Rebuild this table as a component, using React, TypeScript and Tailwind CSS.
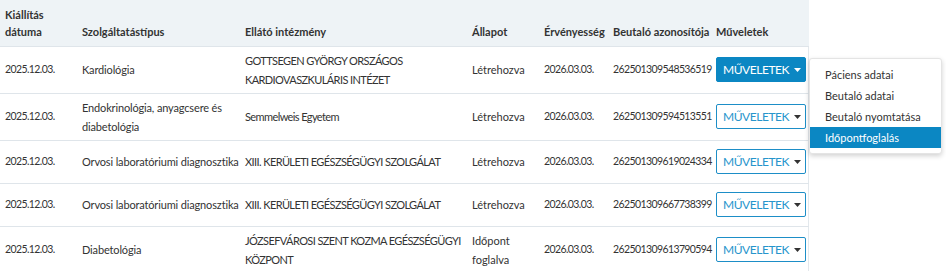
import React from "react";

type Row = {
  date: string;
  service: string;
  provider: string;
  status: string;
  validUntil: string;
  id: string;
  active?: boolean;
};

const rows: Row[] = [
  {
    date: "2025.12.03.",
    service: "Kardiológia",
    provider: "GOTTSEGEN GYÖRGY ORSZÁGOS KARDIOVASZKULÁRIS INTÉZET",
    status: "Létrehozva",
    validUntil: "2026.03.03.",
    id: "262501309548536519",
    active: true,
  },
  {
    date: "2025.12.03.",
    service: "Endokrinológia, anyagcsere és diabetológia",
    provider: "Semmelweis Egyetem",
    status: "Létrehozva",
    validUntil: "2026.03.03.",
    id: "262501309594513551",
  },
  {
    date: "2025.12.03.",
    service: "Orvosi laboratóriumi diagnosztika",
    provider: "XIII. KERÜLETI EGÉSZSÉGÜGYI SZOLGÁLAT",
    status: "Létrehozva",
    validUntil: "2026.03.03.",
    id: "262501309619024334",
  },
  {
    date: "2025.12.03.",
    service: "Orvosi laboratóriumi diagnosztika",
    provider: "XIII. KERÜLETI EGÉSZSÉGÜGYI SZOLGÁLAT",
    status: "Létrehozva",
    validUntil: "2026.03.03.",
    id: "262501309667738399",
  },
  {
    date: "2025.12.03.",
    service: "Diabetológia",
    provider: "JÓZSEFVÁROSI SZENT KOZMA EGÉSZSÉGÜGYI KÖZPONT",
    status: "Időpont foglalva",
    validUntil: "2026.03.03.",
    id: "262501309613790594",
  },
];

const menuItems = ["Páciens adatai", "Beutaló adatai", "Beutaló nyomtatása", "Időpontfoglalás"];

const Caret = ({ className }: { className: string }) => (
  <svg width="7" height="4" viewBox="0 0 7 4" className={className}>
    <path d="M0 0h7L3.5 4z" fill="currentColor" />
  </svg>
);

const ActionButton = ({ active }: { active?: boolean }) => (
  <button
    className={
      active
        ? "flex h-[25px] w-[90px] items-center justify-center gap-[5px] rounded-[2px] border border-[#0b87c3] bg-[#0b87c3] pl-[2px] text-[12px] tracking-[-0.45px] text-white"
        : "flex h-[25px] w-[90px] items-center justify-center gap-[5px] rounded-[2px] border border-[#1d8ec7] bg-white pl-[2px] text-[12px] tracking-[-0.45px] text-[#2795cc]"
    }
  >
    MŰVELETEK
    <Caret className={active ? "text-white" : "text-[#333]"} />
  </button>
);

const num = "text-[10.5px] tracking-[-0.6px]";

const App = () => {
  return (
    <div className="relative h-[271px] w-[946px] overflow-hidden bg-white font-['Lato','Liberation_Sans',sans-serif] text-[11px] text-[#333]">
      <div className="w-[809px] border-r border-[#e3e8ec]">
        <table className="w-full table-fixed border-collapse">
          <colgroup>
            <col className="w-[77px]" />
            <col className="w-[163px]" />
            <col className="w-[227px]" />
            <col className="w-[72px]" />
            <col className="w-[69px]" />
            <col className="w-[103px]" />
            <col className="w-[98px]" />
          </colgroup>
          <thead>
            <tr className="h-[46px] bg-[#eef3f6] text-left align-bottom font-bold leading-[17px]">
              <th className="pb-[6px] pl-[5px]">
                Kiállítás
                <br />
                dátuma
              </th>
              <th className="pb-[6px] pl-[5px]">Szolgáltatástípus</th>
              <th className="pb-[6px] pl-[5px]">Ellátó intézmény</th>
              <th className="pb-[6px] pl-[5px]">Állapot</th>
              <th className="pb-[6px] pl-[5px]">Érvényesség</th>
              <th className="pb-[6px] pl-[5px]">Beutaló azonosítója</th>
              <th className="pb-[6px] pl-[5px]">Műveletek</th>
            </tr>
          </thead>
          <tbody>
            {rows.map((row) => (
              <tr key={row.id} className="h-[43px] border-t border-[#dfe5ea] leading-[19px]">
                <td className={`py-[4px] pl-[5px] ${num}`}>{row.date}</td>
                <td className="py-[4px] pl-[5px] tracking-[-0.15px]">{row.service}</td>
                <td className="py-[4px] pl-[5px] pr-0 tracking-[-0.6px]">{row.provider}</td>
                <td className="py-[4px] pl-[5px] pr-[6px]">{row.status}</td>
                <td className={`py-[4px] pl-[5px] ${num}`}>{row.validUntil}</td>
                <td className={`py-[4px] pl-[5px] ${num}`}>{row.id}</td>
                <td className="py-[4px] pl-[5px]">
                  <ActionButton active={row.active} />
                </td>
              </tr>
            ))}
          </tbody>
        </table>
      </div>

      <div className="absolute left-[809px] top-[58px] w-[133px] rounded-[3px] border border-[#e4e4e4] bg-white py-[5px] shadow-[0_2px_5px_rgba(0,0,0,0.18)]">
        {menuItems.map((item, i) => (
          <div
            key={item}
            className={
              i === menuItems.length - 1
                ? "h-[21px] bg-[#0b87c3] pl-[15px] leading-[21px] text-white"
                : "h-[21px] pl-[15px] leading-[21px] text-[#333]"
            }
          >
            {item}
          </div>
        ))}
      </div>
    </div>
  );
};

export default App;
